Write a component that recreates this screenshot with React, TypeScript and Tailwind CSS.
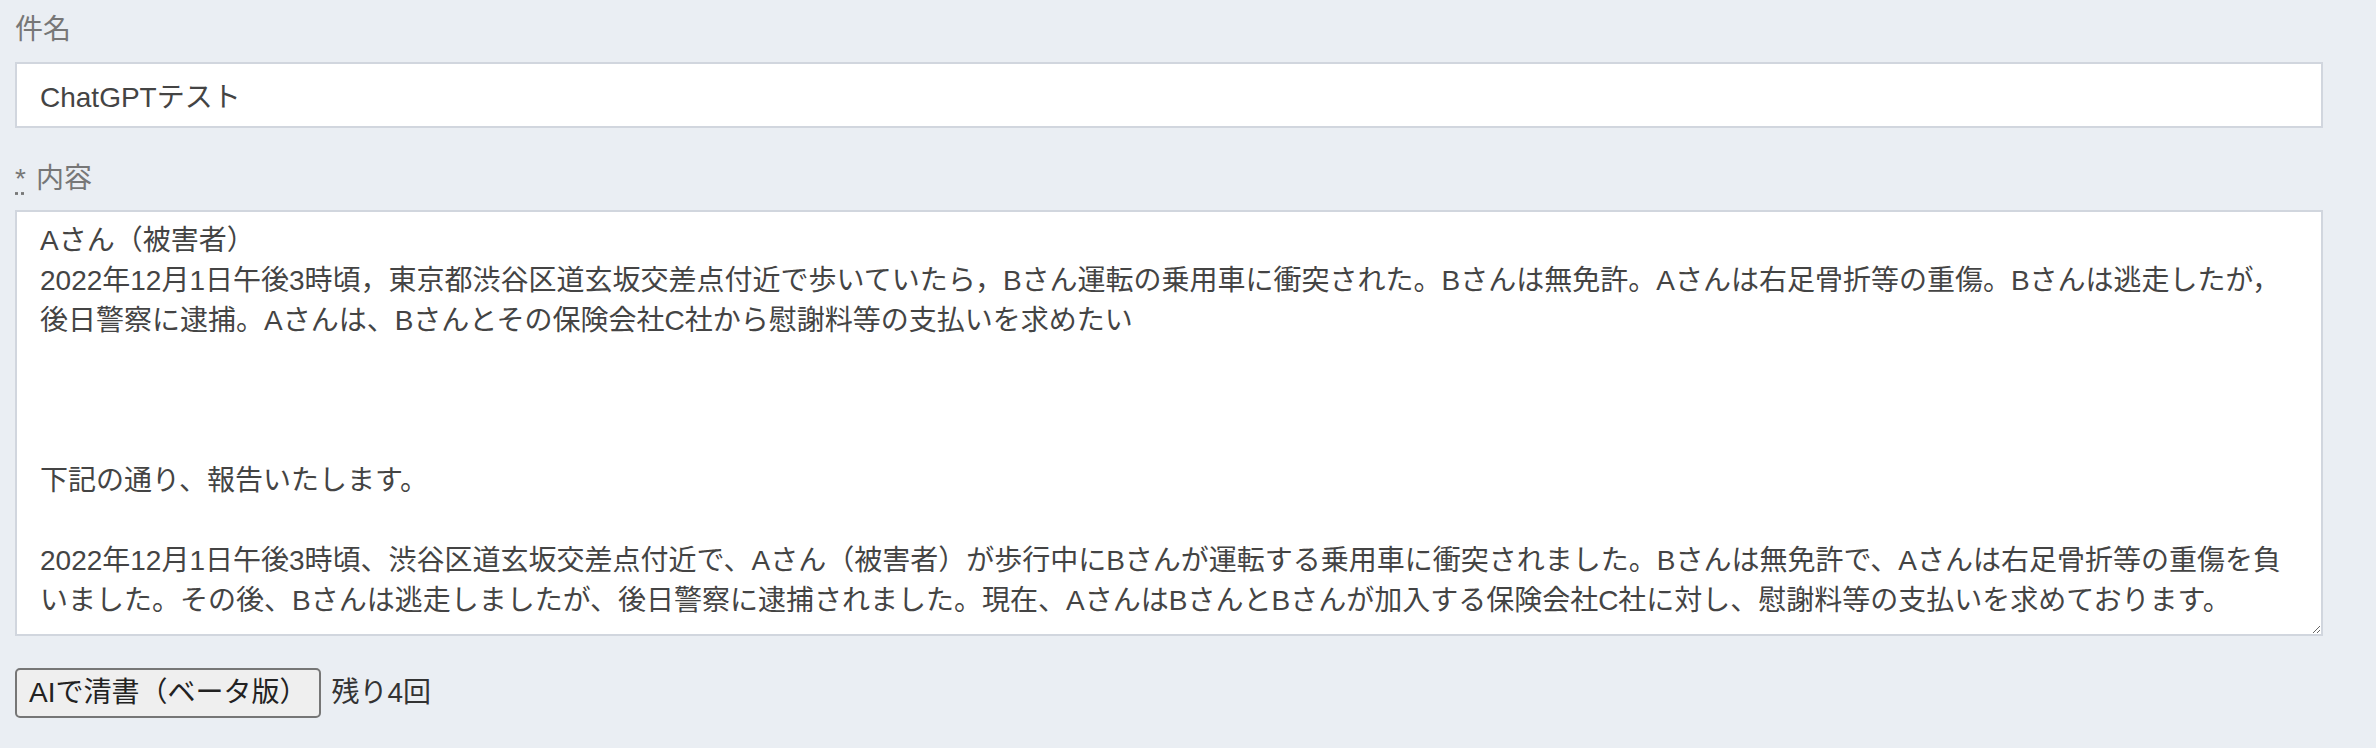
import { useState } from 'react';

const font = '"Liberation Sans", "Noto Sans CJK JP", sans-serif';

const initialBody = [
  'Aさん（被害者）',
  '2022年12月1日午後3時頃，東京都渋谷区道玄坂交差点付近で歩いていたら，Bさん運転の乗用車に衝突された。Bさんは無免許。Aさんは右足骨折等の重傷。Bさんは逃走したが，',
  '後日警察に逮捕。Aさんは、Bさんとその保険会社C社から慰謝料等の支払いを求めたい',
  '',
  '',
  '',
  '下記の通り、報告いたします。',
  '',
  '2022年12月1日午後3時頃、渋谷区道玄坂交差点付近で、Aさん（被害者）が歩行中にBさんが運転する乗用車に衝突されました。Bさんは無免許で、Aさんは右足骨折等の重傷を負',
  'いました。その後、Bさんは逃走しましたが、後日警察に逮捕されました。現在、AさんはBさんとBさんが加入する保険会社C社に対し、慰謝料等の支払いを求めております。',
].join('\n');

export default function App() {
  const [title, setTitle] = useState('ChatGPTテスト');
  const [body, setBody] = useState(initialBody);
  const [remaining, setRemaining] = useState(4);

  return (
    <div className="min-h-screen bg-[#eaeef3] px-[15px] pt-[10px]" style={{ fontFamily: font }}>
      <div className="w-[2308px]">
        {/* 件名 */}
        <label htmlFor="title" className="block text-[28px] leading-[40px] text-[#777777]">
          件名
        </label>
        <input
          id="title"
          type="text"
          value={title}
          onChange={(e) => setTitle(e.target.value)}
          className="mt-[12px] block h-[66px] w-full border-2 border-[#d1d6de] bg-white px-[23px] text-[28px] text-[#444444] outline-none"
        />

        {/* 内容 */}
        <label htmlFor="body" className="mt-[31px] flex text-[28px] leading-[40px] text-[#777777]">
          <abbr title="必須" className="[text-decoration:underline_dotted] [text-underline-offset:4px]">
            *
          </abbr>
          <span className="ml-[10px]">内容</span>
        </label>
        <textarea
          id="body"
          value={body}
          onChange={(e) => setBody(e.target.value)}
          className="mt-[11px] block h-[426px] w-full resize-y overflow-hidden whitespace-pre border-2 border-[#d1d6de] bg-white px-[23px] py-[9px] text-[28px] leading-[40px] text-[#444444] outline-none"
        />

        <div className="mt-[32px] flex items-center">
          <button
            type="button"
            onClick={() => setRemaining((n) => Math.max(0, n - 1))}
            className="h-[50px] rounded-[5px] border-2 border-[#767676] bg-[#efefef] px-[12px] text-[28px] text-[#222222]"
          >
            AIで清書（ベータ版）
          </button>
          <span className="ml-[10px] text-[28px] text-[#333333]">残り{remaining}回</span>
        </div>
      </div>
    </div>
  );
}
